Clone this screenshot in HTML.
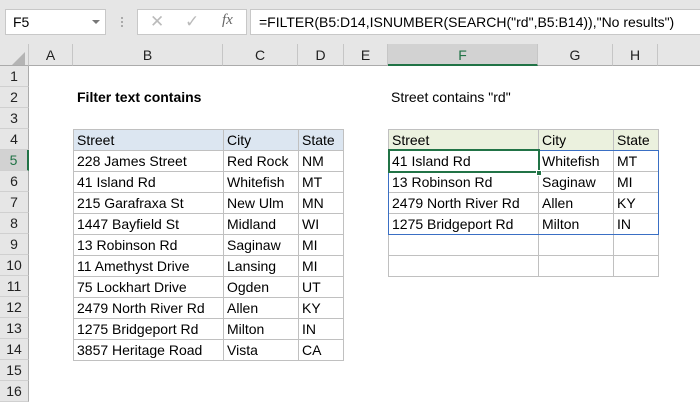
<!DOCTYPE html>
<html><head><style>
*{margin:0;padding:0;box-sizing:border-box}
body{width:700px;height:400px;overflow:hidden;background:#fff;font-family:"Liberation Sans",sans-serif;position:relative;font-size:14px;color:#000}
.a{position:absolute}
.ch{position:absolute;top:44px;height:22px;background:#e6e6e6;border-right:1px solid #c6c6c6;border-bottom:1px solid #ababab;text-align:center;line-height:22px;font-size:14px;color:#222}
.rh{position:absolute;left:0;width:29px;height:21px;background:#e6e6e6;border-bottom:1px solid #d0d0d0;border-right:1px solid #ababab;text-align:center;line-height:21px;font-size:14px;color:#222}
.c{position:absolute;height:22px;border:1px solid #c0c0c0;line-height:20px;padding-left:3px;white-space:nowrap;overflow:hidden;font-size:14px}
</style></head><body>
<div class="a" style="left:0;top:0;width:700px;height:44px;background:#e6e6e6"></div>
<div class="a" style="left:5px;top:9px;width:101px;height:26px;background:#fff;border:1px solid #c8c8c8;font-size:14px;line-height:24px;padding-left:7px">F5</div>
<div class="a" style="left:92px;top:20px;width:0;height:0;border-left:4px solid transparent;border-right:4px solid transparent;border-top:4px solid #777"></div>
<div class="a" style="left:121px;top:17px;width:2px;height:2px;background:#aaa;box-shadow:0 4px #aaa,0 8px #aaa"></div>
<div class="a" style="left:137px;top:9px;width:110px;height:26px;background:#fff;border:1px solid #c8c8c8"></div>
<div class="a" style="left:150px;top:12px;font-size:17px;color:#bbb">✕</div>
<div class="a" style="left:185px;top:12px;font-size:17px;color:#bbb">✓</div>
<div class="a" style="left:222px;top:12px;font-size:15px;color:#666;font-style:italic;font-family:'Liberation Serif',serif">fx</div>
<div class="a" style="left:250px;top:9px;width:460px;height:26px;background:#fff;border:1px solid #c8c8c8;line-height:24px;padding-left:8px;font-size:14px">=FILTER(B5:D14,ISNUMBER(SEARCH("rd",B5:B14)),"No results")</div>

<div class="ch" style="left:0;width:29px"></div>
<div class="a" style="left:12px;top:52px;width:0;height:0;border-left:13px solid transparent;border-bottom:13px solid #b4b4b4"></div>
<div class="ch" style="left:29px;width:44px">A</div>
<div class="ch" style="left:73px;width:150px">B</div>
<div class="ch" style="left:223px;width:75px">C</div>
<div class="ch" style="left:298px;width:46px">D</div>
<div class="ch" style="left:344px;width:44px">E</div>
<div class="ch" style="left:388px;width:150px;background:#d2d2d2;border-bottom:2px solid #217346;color:#217346">F</div>
<div class="ch" style="left:538px;width:75px">G</div>
<div class="ch" style="left:613px;width:45px">H</div>
<div class="ch" style="left:658px;width:50px"></div>

<div class="rh" style="top:66px">1</div>
<div class="rh" style="top:87px">2</div>
<div class="rh" style="top:108px">3</div>
<div class="rh" style="top:129px">4</div>
<div class="rh" style="top:150px;background:#d2d2d2;border-right:2px solid #217346;color:#217346">5</div>
<div class="rh" style="top:171px">6</div>
<div class="rh" style="top:192px">7</div>
<div class="rh" style="top:213px">8</div>
<div class="rh" style="top:234px">9</div>
<div class="rh" style="top:255px">10</div>
<div class="rh" style="top:276px">11</div>
<div class="rh" style="top:297px">12</div>
<div class="rh" style="top:318px">13</div>
<div class="rh" style="top:339px">14</div>
<div class="rh" style="top:360px">15</div>
<div class="rh" style="top:381px">16</div>

<div class="a" style="left:77px;top:89px;font-weight:bold;font-size:14px">Filter text contains</div>
<div class="a" style="left:391px;top:89px;font-size:14px">Street contains "rd"</div>

<!-- left table -->
<div class="c" style="left:73px;top:129px;width:151px;background:#dce6f1">Street</div>
<div class="c" style="left:223px;top:129px;width:76px;background:#dce6f1">City</div>
<div class="c" style="left:298px;top:129px;width:46px;background:#dce6f1">State</div>
<div class="c" style="left:73px;top:150px;width:151px">228 James Street</div><div class="c" style="left:223px;top:150px;width:76px">Red Rock</div><div class="c" style="left:298px;top:150px;width:46px">NM</div>
<div class="c" style="left:73px;top:171px;width:151px">41 Island Rd</div><div class="c" style="left:223px;top:171px;width:76px">Whitefish</div><div class="c" style="left:298px;top:171px;width:46px">MT</div>
<div class="c" style="left:73px;top:192px;width:151px">215 Garafraxa St</div><div class="c" style="left:223px;top:192px;width:76px">New Ulm</div><div class="c" style="left:298px;top:192px;width:46px">MN</div>
<div class="c" style="left:73px;top:213px;width:151px">1447 Bayfield St</div><div class="c" style="left:223px;top:213px;width:76px">Midland</div><div class="c" style="left:298px;top:213px;width:46px">WI</div>
<div class="c" style="left:73px;top:234px;width:151px">13 Robinson Rd</div><div class="c" style="left:223px;top:234px;width:76px">Saginaw</div><div class="c" style="left:298px;top:234px;width:46px">MI</div>
<div class="c" style="left:73px;top:255px;width:151px">11 Amethyst Drive</div><div class="c" style="left:223px;top:255px;width:76px">Lansing</div><div class="c" style="left:298px;top:255px;width:46px">MI</div>
<div class="c" style="left:73px;top:276px;width:151px">75 Lockhart Drive</div><div class="c" style="left:223px;top:276px;width:76px">Ogden</div><div class="c" style="left:298px;top:276px;width:46px">UT</div>
<div class="c" style="left:73px;top:297px;width:151px">2479 North River Rd</div><div class="c" style="left:223px;top:297px;width:76px">Allen</div><div class="c" style="left:298px;top:297px;width:46px">KY</div>
<div class="c" style="left:73px;top:318px;width:151px">1275 Bridgeport Rd</div><div class="c" style="left:223px;top:318px;width:76px">Milton</div><div class="c" style="left:298px;top:318px;width:46px">IN</div>
<div class="c" style="left:73px;top:339px;width:151px">3857 Heritage Road</div><div class="c" style="left:223px;top:339px;width:76px">Vista</div><div class="c" style="left:298px;top:339px;width:46px">CA</div>

<!-- right table -->
<div class="c" style="left:388px;top:129px;width:151px;background:#ebf1de">Street</div>
<div class="c" style="left:538px;top:129px;width:76px;background:#ebf1de">City</div>
<div class="c" style="left:613px;top:129px;width:46px;background:#ebf1de">State</div>
<div class="c" style="left:388px;top:150px;width:151px">41 Island Rd</div><div class="c" style="left:538px;top:150px;width:76px">Whitefish</div><div class="c" style="left:613px;top:150px;width:46px">MT</div>
<div class="c" style="left:388px;top:171px;width:151px">13 Robinson Rd</div><div class="c" style="left:538px;top:171px;width:76px">Saginaw</div><div class="c" style="left:613px;top:171px;width:46px">MI</div>
<div class="c" style="left:388px;top:192px;width:151px">2479 North River Rd</div><div class="c" style="left:538px;top:192px;width:76px">Allen</div><div class="c" style="left:613px;top:192px;width:46px">KY</div>
<div class="c" style="left:388px;top:213px;width:151px">1275 Bridgeport Rd</div><div class="c" style="left:538px;top:213px;width:76px">Milton</div><div class="c" style="left:613px;top:213px;width:46px">IN</div>
<div class="c" style="left:388px;top:234px;width:151px"></div><div class="c" style="left:538px;top:234px;width:76px"></div><div class="c" style="left:613px;top:234px;width:46px"></div>
<div class="c" style="left:388px;top:255px;width:151px"></div><div class="c" style="left:538px;top:255px;width:76px"></div><div class="c" style="left:613px;top:255px;width:46px"></div>
<div class="a" style="left:388px;top:150px;width:271px;height:85px;border:1px solid #3a6fc4"></div>
<div class="a" style="left:388px;top:149px;width:152px;height:24px;border:2px solid #217346"></div>
<div class="a" style="left:536px;top:170px;width:6px;height:6px;background:#217346;border:1px solid #fff"></div>
</body></html>
